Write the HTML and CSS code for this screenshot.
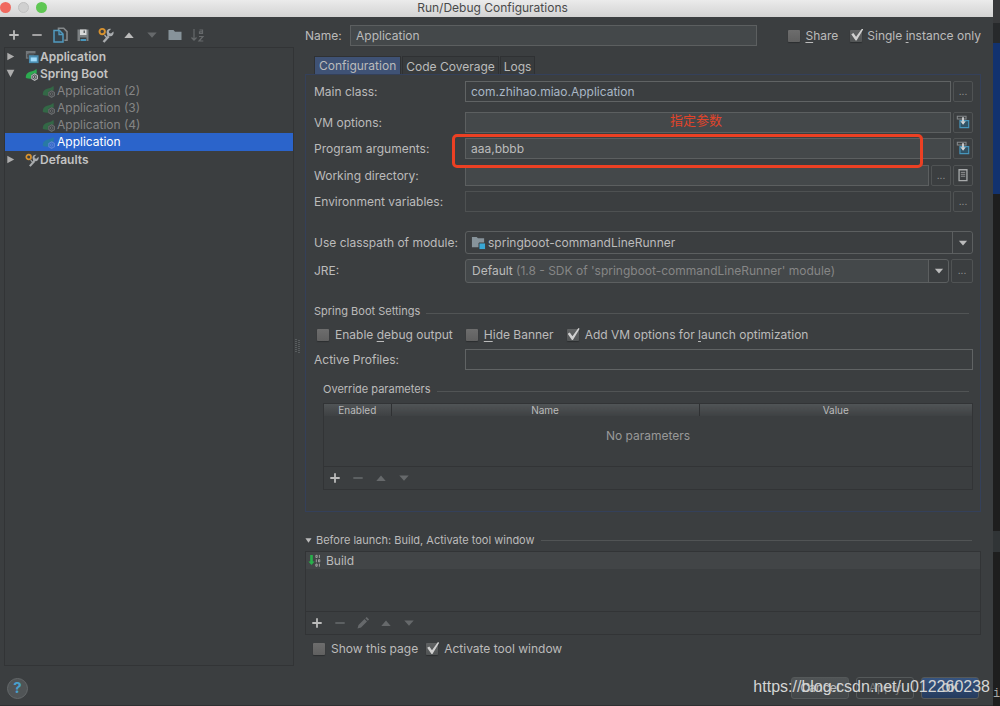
FILE: index.html
```html
<!DOCTYPE html>
<html lang="en">
<head>
<meta charset="utf-8">
<title>Run/Debug Configurations</title>
<link rel="stylesheet" href="styles.css">
</head>
<body>
<svg class="defs" aria-hidden="true">
  <symbol id="plus" viewBox="0 0 16 16"><path d="M8 3.300v9.400M3.300 8h9.400" stroke="currentColor" stroke-width="1.800" fill="none"/></symbol>
  <symbol id="minus" viewBox="0 0 16 16"><path d="M3.300 8h9.400" stroke="currentColor" stroke-width="1.600" fill="none"/></symbol>
  <symbol id="up" viewBox="0 0 16 16"><path d="M3.300 11 8 5.600l4.700 5.400z" fill="currentColor"/></symbol>
  <symbol id="down" viewBox="0 0 16 16"><path d="M3.300 5.400h9.400L8 10.800z" fill="currentColor"/></symbol>
  <symbol id="leaf" viewBox="0 0 16 16">
    <path d="M1 12.500C.5 8 3.500 5.500 7 5c3-.4 4.500-1 6-3 1 4 .5 8-2.500 10.200C7.500 14 4 13.500 1 12.500z" fill="currentColor"/>
    <circle cx="11" cy="11.500" r="4.200" fill="#3b3e40"/>
    <path d="M11 7.800l3.200 1.900v3.600L11 15.200l-3.200-1.900V9.700z" fill="none" stroke="var(--gear)" stroke-width="1.300"/>
    <circle cx="11" cy="11.500" r="1.500" fill="none" stroke="var(--gear)" stroke-width="1.100"/>
  </symbol>
  <symbol id="wrench" viewBox="0 0 16 16">
    <path d="M5.500 15 10.800 9.200" stroke="#a9acae" stroke-width="2.400" fill="none"/>
    <path d="M15.400 4.400 13 6.600 11.200 6l-.4-1.800L13 2c-2.400-.6-4.600 1-4.400 3.600L9.500 9l3.200.3c2.300-.3 3.400-2.600 2.700-4.900z" fill="#a9acae"/>
    <circle cx="4.200" cy="4.600" r="2.700" fill="none" stroke="#d8922e" stroke-width="1.900"/>
    <path d="M6.500 8 9 11" stroke="#a9acae" stroke-width="1.300"/>
  </symbol>
  <symbol id="insert" viewBox="0 0 16 16">
    <path d="M1.500 1.500h10v3h-10z" fill="none" stroke="#85898b" stroke-width="1.200"/>
    <path d="M4.500 6.500h10v8h-10z" fill="#315366" stroke="#4695bb" stroke-width="1.300"/>
    <path d="M8 2.500v5" stroke="#d4d6d7" stroke-width="2"/><path d="M5 7h6.200L8.100 11z" fill="#d4d6d7"/>
  </symbol>
</svg>
<div class="screen">
  <main class="window">
    <header class="titlebar">
      <div class="lights"><span class="light close"></span><span class="light idle"></span><span class="light full"></span></div>
      <h1>Run/Debug Configurations</h1>
    </header>
    <div class="panes">
      <aside class="left">
        <div class="toolbar main-tools">
          <button aria-label="Add"><svg><use href="#plus"/></svg></button>
          <button aria-label="Remove"><svg><use href="#minus"/></svg></button>
          <button aria-label="Copy"><svg viewBox="0 0 16 16"><path d="M6.500 3.500V1.300h5.200L15 4.600v8.600h-2.600" fill="none" stroke="#85898b" stroke-width="1.600"/><path d="M2 3.500h5.500L11 7v8H2z" fill="#35434c" stroke="#519abf" stroke-width="1.500"/><path d="M7 3.500v4h4" fill="none" stroke="#519abf" stroke-width="1.300"/></svg></button>
          <button aria-label="Save"><svg viewBox="0 0 16 16"><path d="M2.500 2.500h11v11.500h-11z" fill="#7d8183"/><path d="M5 2.500h6.500v5.500H5z" fill="#d9d9d9"/><path d="M8.500 3.500h1.500v2.500H8.500z" fill="#65696b"/><path d="M5 10.500h6.500V14H5z" fill="#3b3e40"/><path d="M5.500 12h5.500v2H5.500z" fill="#4796bd"/></svg></button>
          <button aria-label="Edit defaults"><svg><use href="#wrench"/></svg></button>
          <button aria-label="Move up"><svg><use href="#up"/></svg></button>
          <button aria-label="Move down" disabled><svg><use href="#down"/></svg></button>
          <button aria-label="New folder"><svg viewBox="0 0 16 16"><path d="M1.500 3h5L8 4.800h6.500v8.200h-13z" fill="#87939a"/></svg></button>
          <button aria-label="Sort" disabled><svg viewBox="0 0 16 16"><path d="M4 2v11M1.500 10.500 4 13.200l2.500-2.700M9.500 3h3v3.500h-3V4.800h3M9 9.500h4L9 14h4.300" fill="none" stroke="currentColor" stroke-width="1.200"/></svg></button>
        </div>
        <ul class="tree">
          <li class="group"><svg class="arrow" viewBox="0 0 12 12"><path d="M2.500 1.800 10 6l-7.500 4.200z" fill="#adadad"/></svg><svg viewBox="0 0 16 16"><path d="M1 1h11v3H4v6H1z" fill="#73777a"/><path d="M2.500 4.500h8v4h-8z" fill="#4b4f52"/><path d="M4.500 6h11v9h-11z" fill="#4a8db0"/><path d="M6.500 8.500h7V13h-7z" fill="#a1dcfb"/></svg>Application</li>
          <li class="group"><svg class="arrow" viewBox="0 0 12 12"><path d="M1.800 2h8.400L6 10z" fill="#adadad"/></svg><svg><use href="#leaf"/></svg>Spring Boot</li>
          <li class="item"><svg><use href="#leaf"/></svg>Application (2)</li>
          <li class="item"><svg><use href="#leaf"/></svg>Application (3)</li>
          <li class="item"><svg><use href="#leaf"/></svg>Application (4)</li>
          <li class="item selected"><svg viewBox="0 0 16 16"><path d="M1 12.500C.5 8 3.500 5.500 7 5c3-.4 4.500-1 6-3 1 4 .5 8-2.500 10.200C7.500 14 4 13.500 1 12.500z" fill="#287aa4"/><path d="M11 7.800l3.200 1.900v3.600L11 15.200l-3.200-1.900V9.700z" fill="#2f65c8" stroke="#5c83d5" stroke-width="1.300"/><circle cx="11" cy="11.500" r="1.400" fill="none" stroke="#5c83d5"/></svg>Application</li>
          <li class="group"><svg class="arrow" viewBox="0 0 12 12"><path d="M2.500 1.800 10 6l-7.500 4.200z" fill="#adadad"/></svg><svg><use href="#wrench"/></svg>Defaults</li>
        </ul>
      </aside>
      <div class="splitter"><svg viewBox="0 0 5 14"><path d="M1 0v14M4 1v14" stroke="#777a7c" stroke-width="1" stroke-dasharray="1 1"/></svg></div>
      <section class="right">
        <div class="name-row">
          <label for="name">Name:</label>
          <input class="field" id="name" type="text" value="Application">
          <label class="check share"><input type="checkbox"><span><u>S</u>hare</span></label>
          <label class="check"><input type="checkbox" checked><span>Single <u>i</u>nstance only</span></label>
        </div>
        <nav class="tabs">
          <button class="tab active">Configuration</button>
          <button class="tab">Code Coverage</button>
          <button class="tab">Logs</button>
        </nav>
        <div class="panel">
          <div class="row main-class"><label for="cls">Main class:</label><input class="field plain code" id="cls" type="text" value="com.zhihao.miao.Application"><button class="side" aria-label="Browse class">...</button></div>
          <div class="row"><label for="vm">VM options:</label><input class="field" id="vm" type="text"><button class="side" aria-label="Expand VM options"><svg><use href="#insert"/></svg></button><span class="note" lang="zh">指定参数</span></div>
          <div class="row args"><label for="args">Program arguments:</label><input class="field" id="args" type="text" value="aaa,bbbb"><button class="side" aria-label="Expand arguments"><svg><use href="#insert"/></svg></button><span class="marker"></span></div>
          <div class="row"><label for="dir">Working directory:</label><input class="field" id="dir" type="text"><button class="side" aria-label="Browse directory">...</button><button class="side" aria-label="Insert macro"><svg viewBox="0 0 16 16"><path d="M3.500 2h9v12.500h-9z" fill="#3b3e40" stroke="#a7a9aa" stroke-width="1.500"/><path d="M5.500 5h5M5.500 7.200h5M5.500 9.400h5" stroke="#9a9c9d"/></svg></button></div>
          <div class="row"><label for="env">Environment variables:</label><input class="field plain dim" id="env" type="text"><button class="side" aria-label="Edit variables">...</button></div>
          <div class="row module"><label for="module">Use classpath of module:</label>
            <div class="combo"><select id="module"><option>springboot-commandLineRunner</option></select><svg class="combo-icon" viewBox="0 0 16 16"><path d="M1 2h5L7.500 3.500H14V13H1z" fill="#87939a"/><path d="M8.500 8.500H15.500V15.500H8.500z" fill="#38a7d6" stroke="#3b3e40"/></svg><span class="caret"><svg><use href="#down"/></svg></span></div></div>
          <div class="row jre"><label for="jre">JRE:</label>
            <div class="combo filled"><select id="jre"><option>Default</option></select><span class="hint">(1.8 - SDK of 'springboot-commandLineRunner' module)</span><span class="caret"><svg><use href="#down"/></svg></span></div><button class="side" aria-label="Browse JRE">...</button></div>
          <h2 class="heading">Spring Boot Settings</h2>
          <div class="checks">
            <label class="check"><input type="checkbox"><span>Enable <u>d</u>ebug output</span></label>
            <label class="check"><input type="checkbox"><span><u>H</u>ide Banner</span></label>
            <label class="check"><input type="checkbox" checked><span>Add VM options for <u>l</u>aunch optimization</span></label>
          </div>
          <div class="row"><label for="profiles">Active Profiles:</label><input class="field plain" id="profiles" type="text"></div>
          <div class="override">
            <h2 class="heading">Override parameters</h2>
            <div class="box">
              <table>
                <thead><tr><th class="enabled">Enabled</th><th class="pname">Name</th><th>Value</th></tr></thead>
                <tbody><tr><td colspan="3">No parameters</td></tr></tbody>
              </table>
              <div class="toolbar">
                <button aria-label="Add parameter"><svg><use href="#plus"/></svg></button>
                <button aria-label="Remove parameter" disabled><svg><use href="#minus"/></svg></button>
                <button aria-label="Parameter up" disabled><svg><use href="#up"/></svg></button>
                <button aria-label="Parameter down" disabled><svg><use href="#down"/></svg></button>
              </div>
            </div>
          </div>
        </div>
        <h2 class="heading launch"><svg class="fold" viewBox="0 0 8 8"><path d="M.5 1.500h7L4 6.500z" fill="#bbb"/></svg>Before launch: Build, Activate tool window</h2>
        <div class="box tasks">
          <ul><li><svg viewBox="0 0 16 16"><path d="M2.500 1h3v7.500h2L4 12.500.5 8.500h2z" fill="#27b14b"/><g fill="none" stroke="#aaa"><path d="M9 1.500h1.500v2.500H9zM13 1v3.500M9.500 6v3.500M12 6.500h1.500V9H12zM9 11.500h1.500V14H9zM13 11v3.500"/></g></svg>Build</li></ul>
          <div class="toolbar">
            <button aria-label="Add task"><svg><use href="#plus"/></svg></button>
            <button aria-label="Remove task" disabled><svg><use href="#minus"/></svg></button>
            <button aria-label="Edit task" disabled><svg viewBox="0 0 16 16"><path d="M2.500 13.500 3.500 10 9.500 4 12 6.500 6 12.500zM10.300 3.200l1.400-1.200 2.400 2.400L12.800 5.700z" fill="currentColor"/></svg></button>
            <button aria-label="Task up" disabled><svg><use href="#up"/></svg></button>
            <button aria-label="Task down" disabled><svg><use href="#down"/></svg></button>
          </div>
        </div>
        <div class="checks after">
          <label class="check"><input type="checkbox"><span>Show this page</span></label>
          <label class="check"><input type="checkbox" checked><span>Activate tool window</span></label>
        </div>
      </section>
    </div>
    <footer class="footer">
      <button class="help" aria-label="Help">?</button>
      <button class="action">Cancel</button>
      <button class="action apply" disabled>Apply</button>
      <button class="action ok">OK</button>
    </footer>
  </main>
  <div class="behind"><span class="b1"></span><span class="b2"></span><span class="b3"></span><span class="b4"></span><span class="b5"></span><span class="b6">i</span></div>
  <div class="watermark">https://blog.csdn.net/u012260238</div>
</div>
</body>
</html>
```
FILE: styles.css
```css
* { box-sizing: border-box; }
body {
  margin: 0;
  background: #1e1e1e;
  color: #bbb;
  font: 12px/16px Inter, "Noto Sans CJK SC", sans-serif;
}
button, input, select { font: inherit; color: inherit; margin: 0; }
button { padding: 0; border: 0; background: none; }
h1, h2 { margin: 0; font-size: 12px; font-weight: 400; }
ul { list-style: none; margin: 0; padding: 0; }
u { text-underline-offset: 2px; }
svg { display: block; flex: none; width: 14px; height: 14px; }
.defs { position: absolute; width: 0; height: 0; }

.screen { position: relative; display: flex; min-height: 100vh; overflow: hidden; }
.window {
  flex: 1;
  min-width: 0;
  display: flex;
  flex-direction: column;
  background: #3b3e40;
  border-bottom: 1px solid #2e3032;
}

.titlebar {
  display: grid;
  align-items: center;
  height: 17px;
  background: linear-gradient(#ebebeb, #d3d3d3);
  color: #4a4a4a;
}
.titlebar h1 { grid-area: 1 / 1; text-align: center; line-height: 15px; padding: 0 8px 2px 0; }
.lights { grid-area: 1 / 1; display: flex; gap: 7px; padding-bottom: 2px; }
.light { width: 11px; height: 11px; border-radius: 50%; }
.close { background: #f0695f; }
.idle { background: #d0d0d0; border: 1px solid #c0c0c0; }
.full { background: #5fc753; }

.panes { flex: 1; display: flex; }
.left { width: 290px; margin: 0 0 11px 4px; display: flex; flex-direction: column; }
.toolbar { display: flex; align-items: center; gap: 7px; height: 23px; padding-left: 3px; }
.toolbar svg { width: 16px; height: 16px; }
.toolbar button:disabled { color: #66696b; }
.main-tools { height: 30px; padding: 6px 0 0 2px; }
.tree { flex: 1; border: 1px solid #323436; }
.tree li { display: flex; align-items: center; gap: 1px; height: 17px; }
.tree .group { color: #c3c3c3; font-weight: 600; }
.tree .group svg { margin-left: 8px; --gear: #b4b6b7; color: #2cab50; }
.tree .group .arrow { width: 11px; height: 11px; margin-left: 0; }
.tree .item { padding-left: 37px; color: #858585; }
.tree .item svg { --gear: #696c6d; color: #336846; }
.tree .item.selected { background: #2b64cb; color: #fff; }
.tree .selected { height: 18px; }

.splitter { width: 11px; display: flex; padding: 322px 0 0 1px; }
.splitter svg { width: 5px; height: 14px; }
.right { flex: 1; min-width: 0; padding: 8px 12px 0 0; }

.field {
  flex: 1;
  min-width: 0;
  height: 21px;
  padding: 0 5px;
  border: 1px solid #5c5f60;
  background: #44484a;
  outline: 0;
}
.plain { background: transparent; border-color: #606364; }
.dim { border-color: #4e5152; }
.code { color: #a9b7c6; }
.name-row { display: flex; align-items: center; height: 21px; }
.name-row > label:first-child { width: 45px; }
.share { margin: 0 12px 0 31px; }
.name-row .check { gap: 5px; }

.check { display: flex; align-items: center; gap: 6px; white-space: nowrap; }
.check input {
  appearance: none;
  position: relative;
  width: 12px;
  height: 12px;
  border-radius: 1px;
  background: linear-gradient(#6d6d6d, #606060);
  box-shadow: 0 1px 1px #2c2e30;
}
.check input:checked { background: linear-gradient(#606263, #515455); }
.check input:checked::after {
  content: "";
  position: absolute;
  inset: -1px -1px 1px 1px;
  background: #d0d0d0;
  clip-path: polygon(0 48%, 18% 38%, 40% 68%, 90% 0, 100% 7%, 44% 100%, 36% 100%);
}

.tabs { display: flex; gap: 1px; margin: 10px 0 0 9px; }
.tab {
  height: 18px;
  padding: 2px 3px 0;
  border: 1px solid #2f3133;
  border-bottom: 0;
  background: #383b3d;
}
.active { background: #3f5275; padding: 0 4px; }
.panel { border: 1px solid #34405a; padding: 6px 7px 21px 8px; }

.row { position: relative; display: flex; align-items: center; gap: 2px; margin-bottom: 5px; }
.row > label { width: 149px; white-space: nowrap; }
.main-class { margin-bottom: 10px; }
.args { z-index: 1; margin-bottom: 6px; }
.side {
  display: grid;
  place-items: center;
  width: 20px;
  height: 21px;
  padding-bottom: 2px;
  border: 1px solid #505354;
  border-radius: 2px;
  color: #999;
  font-size: 10px;
}
.note {
  position: absolute;
  left: 356px;
  top: 0;
  color: #e0442a;
  font-size: 13px;
  pointer-events: none;
}
.marker {
  position: absolute;
  left: 138px;
  right: 50px;
  top: -4px;
  height: 34px;
  border: 3px solid #ec4023;
  border-radius: 5px;
  pointer-events: none;
}

.combo {
  flex: 1;
  display: grid;
  grid-template-columns: 1fr 20px;
  align-items: center;
  height: 23px;
  border: 1px solid #5c5f60;
  border-radius: 3px;
}
.filled { background: #44484a; }
.combo select {
  grid-area: 1 / 1 / 2 / 3;
  appearance: none;
  width: 100%;
  height: 100%;
  padding: 0 22px 0 6px;
  border: 0;
  background: transparent;
}
.module select { padding-left: 22px; }
.combo-icon { grid-area: 1 / 1; width: 15px; height: 15px; margin-left: 5px; }
.hint { grid-area: 1 / 1; padding-left: 50px; color: #868686; white-space: nowrap; pointer-events: none; }
.caret {
  grid-area: 1 / 2;
  display: grid;
  place-items: center;
  height: 100%;
  border-left: 1px solid #5c5f60;
  border-radius: 0 3px 3px 0;
  background: #3b3e40;
  pointer-events: none;
}
.module { margin-top: 19px; }
.jre { margin-bottom: 20px; }
.jre .combo, .jre .side { height: 24px; }
.jre .side { width: 22px; }

.heading { display: flex; align-items: center; gap: 6px; font-size: 11px; }
.heading::after { content: ""; flex: 1; height: 1px; margin: 4px 4px 0 0; background: #515455; }
.checks { display: flex; gap: 13px; height: 22px; margin: 5px 0 3px 3px; }

.override { padding: 6px 0 0 9px; }
.box { border: 1px solid #323436; }
.box .toolbar { border-top: 1px solid #323436; }
.override .box { margin-top: 6px; }
table { width: 100%; border-collapse: collapse; table-layout: fixed; }
th {
  height: 12px;
  padding: 0;
  border-right: 1px solid #2f3133;
  background: linear-gradient(#505456, #3e4143);
  font-size: 10px;
  font-weight: 400;
  line-height: 12px;
}
th:last-child { border-right: 0; }
.enabled { width: 67px; }
.pname { width: 308px; }
td { height: 50px; padding: 0 0 10px; text-align: center; color: #999; }

.launch { margin-top: 20px; gap: 4px; }
.launch::after { margin: 0 9px 0 2px; }
.fold { width: 7px; height: 7px; }
.tasks { margin-top: 3px; }
.tasks ul { height: 59px; }
.tasks li { display: flex; align-items: center; gap: 4px; height: 17px; padding-left: 2px; background: #424547; }
.after { gap: 8px; margin: 3px 0 0 8px; }

.footer { display: flex; align-items: center; gap: 7px; padding: 0 14px 6px 7px; }
.help {
  width: 21px;
  height: 21px;
  margin-right: auto;
  border: 1px solid #64686a;
  border-radius: 50%;
  background: #505456;
  color: #48a0cc;
  font-size: 15px;
  font-weight: 700;
}
.action {
  width: 58px;
  height: 22px;
  border: 1px solid #55595a;
  border-radius: 3px;
  background: linear-gradient(#505456, #424648);
}
.apply { background: #3b3e40; color: #777; }
.ok { background: linear-gradient(#365480, #253b5e); font-weight: 600; }

.behind { width: 7px; display: flex; flex-direction: column; color: #aaa; }
.b1 { height: 23px; background: #38393b; }
.b2 { height: 20px; background: #27292b; }
.b3 { height: 151px; background: #12326f; }
.b4 { height: 337px; }
.b5 { height: 21px; background: #303436; }
.b6 { padding-top: 134px; font-family: "Liberation Mono", monospace; }
.watermark {
  position: absolute;
  right: 10px;
  bottom: 9px;
  color: #d4d5d5;
  font: 16px/20px "Liberation Sans", sans-serif;
  pointer-events: none;
}
```
